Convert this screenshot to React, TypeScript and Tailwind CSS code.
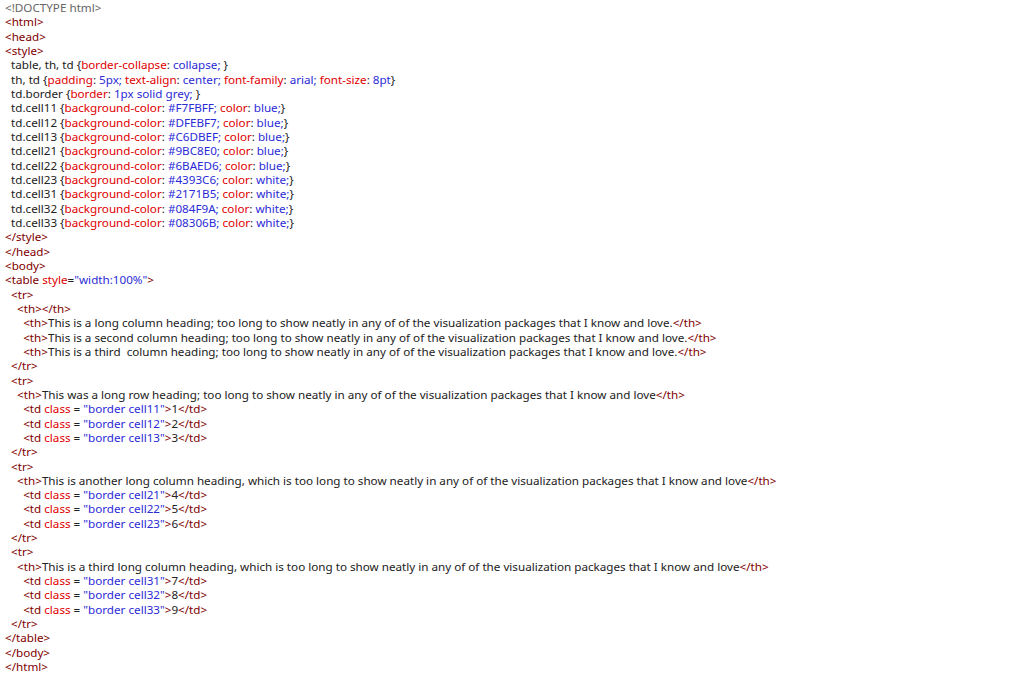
import React from "react";

type Seg = [string, string];
const T = "text-[#800000]";
const P = "text-[#e00000]";
const V = "text-[#2b2bd6]";
const K = "text-[#222]";
const G = "text-[#666]";

const tag = (s: string): Seg => [s, T];
const txt = (s: string): Seg => [s, K];

const css = (sel: string, body: [string, string][], trail = ""): Seg[] => {
  const out: Seg[] = [["  " + sel + " {", K]];
  body.forEach(([p, v], i) => {
    if (i > 0) out.push([" ", K]);
    out.push([p, P], [": ", K], [v + ";", V]);
  });
  out.push([trail + "}", K]);
  return out;
};

const cell = (name: string, bg: string, c: string) =>
  css("td." + name, [["background-color", bg], ["color", c]]);

const td = (cls: string, n: number): Seg[] => [
  tag("      <td "),
  ["class", P],
  [" = ", K],
  ['"border ' + cls + '"', V],
  tag(">"),
  txt(String(n)),
  tag("</td>"),
];

const th = (s: string): Seg[] => [tag("      <th>"), txt(s), tag("</th>")];
const love = " neatly in any of of the visualization packages that I know and love";

const lines: Seg[][] = [
  [["<!DOCTYPE html>", G]],
  [tag("<html>")],
  [tag("<head>")],
  [tag("<style>")],
  [...css("table, th, td", [["border-collapse", "collapse"]]).slice(0, -1), [" }", K]],
  [
    ["  th, td {", K], ["padding", P], [": ", K], ["5px;", V], [" ", K],
    ["text-align", P], [": ", K], ["center;", V], [" ", K],
    ["font-family", P], [": ", K], ["arial;", V], [" ", K],
    ["font-size", P], [": ", K], ["8pt", V], ["}", K],
  ],
  [["  td.border {", K], ["border", P], [": ", K], ["1px solid grey;", V], [" }", K]],
  cell("cell11", "#F7FBFF", "blue"),
  cell("cell12", "#DFEBF7", "blue"),
  cell("cell13", "#C6DBEF", "blue"),
  cell("cell21", "#9BC8E0", "blue"),
  cell("cell22", "#6BAED6", "blue"),
  cell("cell23", "#4393C6", "white"),
  cell("cell31", "#2171B5", "white"),
  cell("cell32", "#084F9A", "white"),
  cell("cell33", "#08306B", "white"),
  [tag("</style>")],
  [tag("</head>")],
  [tag("<body>")],
  [tag("<table "), ["style", P], ["=", K], ['"width:100%"', V], tag(">")],
  [tag("  <tr>")],
  [tag("    <th></th>")],
  th("This is a long column heading; too long to show neatly in any of of the visualization packages that I know and love."),
  th("This is a second column heading; too long to show neatly in any of of the visualization packages that I know and love."),
  th("This is a third  column heading; too long to show neatly in any of of the visualization packages that I know and love."),
  [tag("  </tr>")],
  [tag("  <tr>")],
  [tag("    <th>"), txt("This was a long row heading; too long to show" + love), tag("</th>")],
  td("cell11", 1), td("cell12", 2), td("cell13", 3),
  [tag("  </tr>")],
  [tag("  <tr>")],
  [tag("    <th>"), txt("This is another long column heading, which is too long to show" + love), tag("</th>")],
  td("cell21", 4), td("cell22", 5), td("cell23", 6),
  [tag("  </tr>")],
  [tag("  <tr>")],
  [tag("    <th>"), txt("This is a third long column heading, which is too long to show" + love), tag("</th>")],
  td("cell31", 7), td("cell32", 8), td("cell33", 9),
  [tag("  </tr>")],
  [tag("</table>")],
  [tag("</body>")],
  [tag("</html>")],
];

export default function App() {
  return (
    <div className="w-[1024px] h-[683px] bg-white overflow-hidden pl-[5px] pt-[1px] font-['Liberation_Mono'] text-[11.67px] leading-[14.33px]">
      {lines.map((l, i) => (
        <div key={i} className="whitespace-pre">
          {l.map(([s, c], j) => (
            <span key={j} className={c}>{s}</span>
          ))}
        </div>
      ))}
    </div>
  );
}
